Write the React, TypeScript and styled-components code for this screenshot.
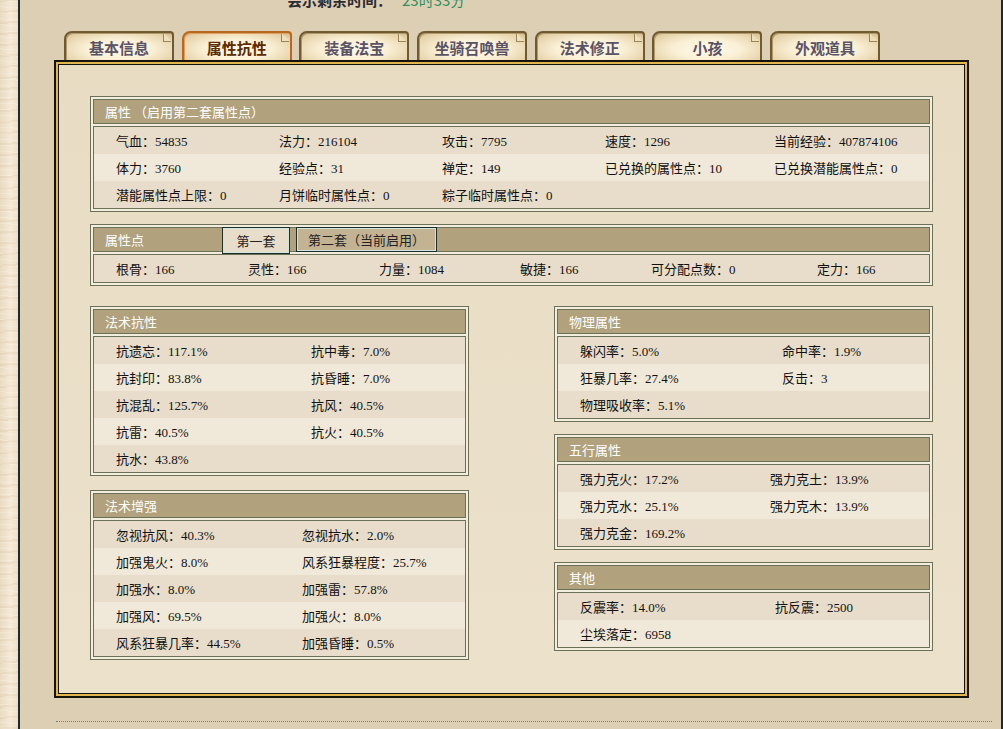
import styled, { createGlobalStyle } from "styled-components";

const GlobalStyle = createGlobalStyle`
  html, body {
    margin: 0;
    padding: 0;
    background: #dccfb4;
  }
  body {
    font-family: "Liberation Serif", "Noto Sans CJK SC", serif;
    font-size: 13px;
    color: #111;
  }
`;

const Page = styled.div`
  display: flex;
  width: 1003px;
  height: 729px;
  overflow: hidden;
  background: #dccfb4;
`;

const Parchment = styled.div`
  width: 18px;
  flex-shrink: 0;
  border-right: 2px solid #1c2a30;
  background:
    repeating-linear-gradient(176deg, rgba(205, 180, 145, 0.18) 0 2px, transparent 2px 11px),
    repeating-linear-gradient(4deg, rgba(255, 250, 240, 0.25) 0 1px, transparent 1px 6px),
    linear-gradient(90deg, #eadac0, #f5ead8 60%, #eedfc6);
`;

const Main = styled.div`
  flex: 1;
  display: flex;
  flex-direction: column;
  border-right: 2px solid #1c2a30;
`;

const TopInfo = styled.div`
  height: 8px;
  overflow: hidden;
  padding-left: 267px;
`;

const TopLine = styled.div`
  margin-top: -9px;
  font-family: "Noto Sans CJK SC", sans-serif;
  font-size: 15px;
  line-height: 17px;
  font-weight: bold;
  color: #2d2a30;
  white-space: nowrap;
`;

const TopValue = styled.span`
  margin-left: 10px;
  font-weight: normal;
  color: #2f9060;
`;

const TabBar = styled.div`
  display: grid;
  grid-template-columns: repeat(7, 110px);
  column-gap: 7.7px;
  margin-top: 23px;
  padding-left: 44px;
`;

const Tab = styled.div<{ $active?: boolean }>`
  position: relative;
  height: 29px;
  box-sizing: border-box;
  border: 2px solid ${({ $active }) => ($active ? "#b8691f" : "#6f5a34")};
  border-bottom: none;
  border-radius: 8px 4px 0 0;
  box-shadow: inset 1px 1px 0 ${({ $active }) => ($active ? "#e0a060" : "#b09868")};
  background: radial-gradient(ellipse at 50% 60%, #fff9e8 0%, #faf0d6 45%, #e4d0a6 85%, #cdb688 100%);
  font-family: "Noto Sans CJK SC", sans-serif;
  font-size: 15px;
  font-weight: bold;
  color: ${({ $active }) => ($active ? "#5a2c00" : "#5a5366")};
  display: flex;
  align-items: center;
  justify-content: center;
  padding-top: 2px;

  &::after {
    content: "";
    position: absolute;
    top: 1px;
    right: 1px;
    width: 7px;
    height: 7px;
    background: linear-gradient(225deg, transparent 50%, #efe0bd 50%);
    border-left: 1px solid #9a8458;
    border-bottom: 1px solid #9a8458;
  }
`;

const Panel = styled.div`
  margin-left: 34px;
  width: 915px;
  height: 638px;
  box-sizing: border-box;
  border: 2px solid #15140c;
  box-shadow: inset 0 0 0 2px #e2b64e, inset 0 0 0 3px #15140c;
  background: linear-gradient(180deg, #e8dcc3 0%, #eadfc8 60%, #ece2cc 100%);
  padding: 34px;
  display: flex;
  flex-direction: column;
`;

const Box = styled.div`
  border: 1px solid #6b7157;
  padding: 2px;
  background: #f2eddc;
  display: flex;
  flex-direction: column;
  gap: 2px;
`;

const BoxHeader = styled.div`
  height: 23px;
  border: 1px solid #6b7157;
  background: #b1a17c;
  color: #fff;
  font-family: "Noto Sans CJK SC", sans-serif;
  font-size: 13px;
  display: flex;
  align-items: center;
  padding-left: 11px;
`;

const HeaderLabel = styled.span`
  width: 117px;
`;

const SubTab = styled.div<{ $active?: boolean }>`
  position: relative;
  z-index: 1;
  align-self: stretch;
  margin: -1px 6px ${({ $active }) => ($active ? "-3px" : "-1px")} 0;
  width: ${({ $active }) => ($active ? "66px" : "139px")};
  border: 1px solid #1d2d2b;
  box-shadow: inset 0 0 0 1px #cfe6dd;
  background: ${({ $active }) => ($active ? "#e8dcca" : "#c3b392")};
  color: #222;
  font-family: "Noto Sans CJK SC", sans-serif;
  font-size: 13px;
  display: flex;
  align-items: center;
  justify-content: center;
`;

const BoxBody = styled.div`
  border: 1px solid #6b7157;
`;

const Row = styled.div<{ $cols: string; $alt?: boolean }>`
  display: grid;
  grid-template-columns: ${({ $cols }) => $cols};
  height: 27px;
  align-items: center;
  padding-left: 22px;
  background: ${({ $alt }) => ($alt ? "#f0e8d8" : "#e8ddcb")};
  white-space: nowrap;
`;

const Spacer = styled.div`
  height: 12px;
  flex-shrink: 0;
`;

const Columns = styled.div`
  display: flex;
  justify-content: space-between;
  align-items: flex-start;
  margin-top: 20px;
`;

const Column = styled.div<{ $gap: number }>`
  width: 379px;
  display: flex;
  flex-direction: column;
  gap: ${({ $gap }) => $gap}px;
`;

const Dotted = styled.div`
  margin: 23px 0 0 36px;
  width: 936px;
  border-top: 1px dotted #5f8a86;
`;

interface BoxProps {
  title: string;
  cols: string;
  rows: string[][];
}

function InfoBox({ title, cols, rows }: BoxProps) {
  return (
    <Box>
      <BoxHeader>{title}</BoxHeader>
      <BoxBody>
        {rows.map((r, i) => (
          <Row key={i} $cols={cols} $alt={i % 2 === 1}>
            {r.map((c) => (
              <span key={c}>{c}</span>
            ))}
          </Row>
        ))}
      </BoxBody>
    </Box>
  );
}

const tabs = ["基本信息", "属性抗性", "装备法宝", "坐骑召唤兽", "法术修正", "小孩", "外观道具"];

const baseRows = [
  ["气血：54835", "法力：216104", "攻击：7795", "速度：1296", "当前经验：407874106"],
  ["体力：3760", "经验点：31", "禅定：149", "已兑换的属性点：10", "已兑换潜能属性点：0"],
  ["潜能属性点上限：0", "月饼临时属性点：0", "粽子临时属性点：0"],
];

const pointRow = ["根骨：166", "灵性：166", "力量：1084", "敏捷：166", "可分配点数：0", "定力：166"];

const resistRows = [
  ["抗遗忘：117.1%", "抗中毒：7.0%"],
  ["抗封印：83.8%", "抗昏睡：7.0%"],
  ["抗混乱：125.7%", "抗风：40.5%"],
  ["抗雷：40.5%", "抗火：40.5%"],
  ["抗水：43.8%"],
];

const boostRows = [
  ["忽视抗风：40.3%", "忽视抗水：2.0%"],
  ["加强鬼火：8.0%", "风系狂暴程度：25.7%"],
  ["加强水：8.0%", "加强雷：57.8%"],
  ["加强风：69.5%", "加强火：8.0%"],
  ["风系狂暴几率：44.5%", "加强昏睡：0.5%"],
];

const physRows = [
  ["躲闪率：5.0%", "命中率：1.9%"],
  ["狂暴几率：27.4%", "反击：3"],
  ["物理吸收率：5.1%"],
];

const elemRows = [
  ["强力克火：17.2%", "强力克土：13.9%"],
  ["强力克水：25.1%", "强力克木：13.9%"],
  ["强力克金：169.2%"],
];

const otherRows = [
  ["反震率：14.0%", "抗反震：2500"],
  ["尘埃落定：6958"],
];

export default function App() {
  return (
    <>
      <GlobalStyle />
      <Page>
        <Parchment />
        <Main>
          <TopInfo>
            <TopLine>
              会示剩余时间：<TopValue>23时33分</TopValue>
            </TopLine>
          </TopInfo>
          <TabBar>
            {tabs.map((t) => (
              <Tab key={t} $active={t === "属性抗性"}>
                {t}
              </Tab>
            ))}
          </TabBar>
          <Panel>
            <InfoBox title="属性 （启用第二套属性点）" cols="163px 163px 163px 169px 1fr" rows={baseRows} />
            <Spacer />
            <Box>
              <BoxHeader>
                <HeaderLabel>属性点</HeaderLabel>
                <SubTab $active>第一套</SubTab>
                <SubTab>第二套（当前启用）</SubTab>
              </BoxHeader>
              <BoxBody>
                <Row $cols="132px 131px 141px 131px 166px 1fr">
                  {pointRow.map((c) => (
                    <span key={c}>{c}</span>
                  ))}
                </Row>
              </BoxBody>
            </Box>
            <Columns>
              <Column $gap={14}>
                <InfoBox title="法术抗性" cols="195px 1fr" rows={resistRows} />
                <InfoBox title="法术增强" cols="186px 1fr" rows={boostRows} />
              </Column>
              <Column $gap={12}>
                <InfoBox title="物理属性" cols="202px 1fr" rows={physRows} />
                <InfoBox title="五行属性" cols="190px 1fr" rows={elemRows} />
                <InfoBox title="其他" cols="195px 1fr" rows={otherRows} />
              </Column>
            </Columns>
          </Panel>
          <Dotted />
        </Main>
      </Page>
    </>
  );
}
